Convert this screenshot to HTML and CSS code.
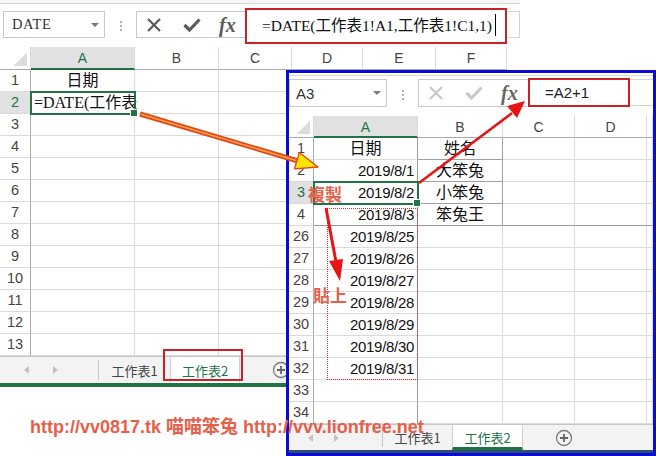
FILE: index.html
```html
<!DOCTYPE html>
<html>
<head>
<meta charset="utf-8">
<title>Excel 日期複製</title>
<link rel="stylesheet" href="styles.css">
</head>
<body>
<div class="stage">

  <div class="win outer">
    <div class="ribbon-edge"></div>
    <div class="fbar">
      <div class="namebox serif"><span>DATE</span><i class="dd"></i></div>
      <div class="grip"><b></b><b></b><b></b></div>
      <div class="fbtns dark">
        <svg class="ic-x" width="16" height="16" viewBox="0 0 16 16"><path d="M2 2L14 14M14 2L2 14"/></svg>
        <svg class="ic-ok" width="18" height="16" viewBox="0 0 18 16"><path d="M1.5 8L6.5 13L16.5 2.5"/></svg>
        <span class="fx">fx</span>
      </div>
      <div class="finput hl serif">=DATE(工作表1!A1,工作表1!C1,1)<span class="caret"></span></div>
      <div class="frest"></div>
    </div>
    <div class="grid g-outer">
      <div class="h corner"></div><div class="h on">A</div><div class="h">B</div><div class="h">C</div><div class="h">D</div><div class="h">E</div><div class="h">F</div>
      <div class="r">1</div><div class="c ctr serif">日期</div><div></div><div></div><div></div><div></div><div></div>
      <div class="r on">2</div><div class="c sel clip serif">=DATE(工作表</div><div></div><div></div><div></div><div></div><div></div>
      <div class="r">3</div><div></div><div></div><div></div><div></div><div></div><div></div>
      <div class="r">4</div><div></div><div></div><div></div><div></div><div></div><div></div>
      <div class="r">5</div><div></div><div></div><div></div><div></div><div></div><div></div>
      <div class="r">6</div><div></div><div></div><div></div><div></div><div></div><div></div>
      <div class="r">7</div><div></div><div></div><div></div><div></div><div></div><div></div>
      <div class="r">8</div><div></div><div></div><div></div><div></div><div></div><div></div>
      <div class="r">9</div><div></div><div></div><div></div><div></div><div></div><div></div>
      <div class="r">10</div><div></div><div></div><div></div><div></div><div></div><div></div>
      <div class="r">11</div><div></div><div></div><div></div><div></div><div></div><div></div>
      <div class="r">12</div><div></div><div></div><div></div><div></div><div></div><div></div>
      <div class="r">13</div><div></div><div></div><div></div><div></div><div></div><div></div>
    </div>
    <div class="tabs t-outer">
      <div class="nav"><i class="tri-l"></i><i class="tri-r"></i></div>
      <div class="tab">工作表1</div>
      <div class="tab act">工作表2</div>
      <svg class="plus" width="18" height="18" viewBox="0 0 18 18"><circle cx="9" cy="9" r="7.5"/><path d="M9 5V13M5 9H13"/></svg>
    </div>
    <div class="status"></div>
  </div>

  <div class="win inner">
    <div class="edge"></div>
    <div class="fbar">
      <div class="namebox"><span>A3</span><i class="dd"></i></div>
      <div class="grip"><b></b><b></b><b></b></div>
      <div class="fbtns light">
        <svg class="ic-x" width="16" height="16" viewBox="0 0 16 16"><path d="M2 2L14 14M14 2L2 14"/></svg>
        <svg class="ic-ok" width="18" height="16" viewBox="0 0 18 16"><path d="M1.5 8L6.5 13L16.5 2.5"/></svg>
        <span class="fx">fx</span>
      </div>
      <div class="finput hl">=A2+1</div>
      <div class="frest"></div>
    </div>
    <div class="grid g-inner">
      <div class="h corner"></div><div class="h on">A</div><div class="h">B</div><div class="h">C</div><div class="h">D</div><div class="h"></div>
      <div class="r">1</div><div class="c ctr bA">日期</div><div class="c ctr bB">姓名</div><div></div><div></div><div></div>
      <div class="r">2</div><div class="c num bA">2019/8/1</div><div class="c ctr bB">大笨兔</div><div></div><div></div><div></div>
      <div class="r on">3</div><div class="c num bA sel">2019/8/2</div><div class="c ctr bB">小笨兔</div><div></div><div></div><div></div>
      <div class="r">4</div><div class="c num bA hb">2019/8/3</div><div class="c ctr bB hb">笨兔王</div><div class="hb"></div><div class="hb"></div><div class="hb"></div>
      <div class="r">26</div><div class="c num bA">2019/8/25</div><div></div><div></div><div></div><div></div>
      <div class="r">27</div><div class="c num bA">2019/8/26</div><div></div><div></div><div></div><div></div>
      <div class="r">28</div><div class="c num bA">2019/8/27</div><div></div><div></div><div></div><div></div>
      <div class="r">29</div><div class="c num bA">2019/8/28</div><div></div><div></div><div></div><div></div>
      <div class="r">30</div><div class="c num bA">2019/8/29</div><div></div><div></div><div></div><div></div>
      <div class="r">31</div><div class="c num bA">2019/8/30</div><div></div><div></div><div></div><div></div>
      <div class="r">32</div><div class="c num bA">2019/8/31</div><div></div><div></div><div></div><div></div>
      <div class="r">33</div><div class="bA"></div><div></div><div></div><div></div><div></div>
      <div class="r">34</div><div class="bA"></div><div></div><div></div><div></div><div></div>
    </div>
    <div class="tabs t-inner">
      <div class="nav"><i class="tri-l"></i><i class="tri-r"></i></div>
      <div class="tab">工作表1</div>
      <div class="tab act">工作表2</div>
      <svg class="plus" width="18" height="18" viewBox="0 0 18 18"><circle cx="9" cy="9" r="7.5"/><path d="M9 5V13M5 9H13"/></svg>
    </div>
    <div class="status"></div>
    <div class="marquee"></div>
  </div>

  <div class="hlbox tabbox"></div>

  <svg class="overlay" width="656" height="456" viewBox="0 0 656 456">
    <line x1="140" y1="114" x2="298" y2="161" stroke="#e2461a" stroke-width="5"/>
    <line x1="141" y1="114.3" x2="298" y2="161" stroke="#ffa544" stroke-width="1.6"/>
    <polygon points="318,167 294.5,168.8 299.4,152.6" fill="#ffe600" stroke="#e8401a" stroke-width="1.3" stroke-linejoin="round"/>
    <line x1="419" y1="183" x2="512" y2="113" stroke="#e61414" stroke-width="2.6"/>
    <polygon points="525,101 517,118 507,106" fill="#e61414"/>
    <line x1="326" y1="208" x2="336" y2="262" stroke="#e61414" stroke-width="3"/>
    <polygon points="340,281 329,261 343,259" fill="#e61414"/>
  </svg>

  <div class="note n-copy">複製</div>
  <div class="note n-paste">貼上</div>
  <div class="watermark">http://vv0817.tk 喵喵笨兔 http://vvv.lionfree.net</div>
</div>
</body>
</html>
```
FILE: styles.css
```css
* { box-sizing: border-box; }
html, body { margin: 0; padding: 0; }
body {
  width: 656px; height: 456px; overflow: hidden; background: #fff;
  font-family: "Liberation Sans", "Noto Sans CJK TC", sans-serif; color: #222;
}
.stage { position: relative; width: 656px; height: 456px; }
.serif { font-family: "Liberation Serif", "Noto Sans CJK TC", serif; }

/* windows */
.win { display: flex; flex-direction: column; background: #fff; }
.outer { width: 520px; }
.ribbon-edge { height: 4px; border-bottom: 1px solid #d9d9d9; background: #f6f6f6; }
.inner {
  position: absolute; left: 286px; top: 70px; width: 370px; height: 386px;
  border: 3px solid #0b0bd6; overflow: hidden; z-index: 2;
}
.edge { height: 3px; border-bottom: 1px solid #d9d9d9; }

/* formula bar */
.fbar { display: flex; align-items: flex-start; flex: none; }
.outer .fbar { height: 39px; margin-top: 4px; }
.inner .fbar { height: 40px; }
.namebox {
  display: flex; align-items: center; justify-content: space-between;
  border: 1px solid #c8c8c8; color: #333; flex: none;
}
.outer .namebox { margin: 3px 0 0 3px; width: 102px; height: 27px; padding: 0 5px 0 8px; font-size: 14.5px; letter-spacing: 0.6px; }
.inner .namebox { margin-top: 3px; width: 98px; height: 28px; padding: 0 5px 0 6px; font-size: 15px; }
.dd { width: 0; height: 0; border-left: 4px solid transparent; border-right: 4px solid transparent; border-top: 4px solid #7a7a7a; }
.grip { width: 31px; display: flex; flex-direction: column; align-items: center; gap: 2px; flex: none; }
.outer .grip { margin-top: 13px; }
.inner .grip { margin-top: 14px; }
.grip b { width: 2px; height: 2px; background: #b0b0b0; }
.fbtns {
  display: flex; align-items: center; padding-left: 9px; flex: none;
  border: 1px solid #c8c8c8; border-right: 0; margin-top: 3px;
}
.outer .fbtns { width: 109px; height: 27px; }
.inner .fbtns { width: 110px; height: 28px; }
.fbtns svg path { fill: none; stroke-linecap: butt; }
.ic-x path { stroke-width: 2.2; }
.ic-ok { margin-left: 21px; }
.ic-ok path { stroke-width: 3.2; }
.fx { margin-left: 18px; font: italic bold 20px "Liberation Serif", serif; line-height: 20px; }
.dark path { stroke: #5a5a5a; }
.dark .fx { color: #5a5a5a; }
.light path { stroke: #c9c9c9; }
.light .fx { color: #666; }
.finput { flex: none; white-space: nowrap; color: #111; }
.hl { border: 2px solid #cc2027; }
.outer .finput { width: 262px; height: 36px; padding-left: 15px; font-size: 15.5px; line-height: 32px; }
.inner .finput { width: 102px; height: 29px; margin-top: 2px; padding-left: 15px; font-size: 15px; line-height: 25px; color: #222; }
.caret { display: inline-block; width: 1px; height: 22px; background: #000; vertical-align: -5px; margin-left: 3px; }
.frest { flex: 1; margin-top: 3px; height: 27px; border-top: 1px solid #d4d4d4; border-bottom: 1px solid #d4d4d4; }
.outer .frest { border-right: 1px solid #d4d4d4; }

/* grids */
.grid { display: grid; flex: none; }
.g-outer { grid-template-columns: 31px 104px 84px 73px 71px 73px 71px; grid-template-rows: 23px; grid-auto-rows: 22px; }
.g-inner { grid-template-columns: 25px 104px 85px 72px 72px 6px; grid-template-rows: 22px; grid-auto-rows: 22px; }
.grid > div {
  border-right: 1px solid #dadada; border-bottom: 1px solid #dadada;
  min-width: 0; white-space: nowrap; overflow: hidden;
}
.grid > .h { text-align: center; font-size: 14px; color: #444; line-height: 22px; border-bottom-color: #ababab; }
.grid > .h.on { background: #e1e1e1; color: #217346; border-bottom: 2px solid #217346; }
.grid > .corner {
  background: linear-gradient(to bottom right, transparent 50%, #dcdcdc 50%) no-repeat right 3px bottom 3px / 14px 14px;
}
.g-inner > .corner { background-size: 13px 13px; }
.grid > .r { text-align: center; font-size: 14.5px; color: #444; line-height: 21px; border-right-color: #ababab; }
.grid > .r.on { background: #e1e1e1; color: #217346; }
.c { font-size: 16px; line-height: 21px; padding: 0 3px; color: #111; }
.ctr { text-align: center; }
.num { text-align: right; font-size: 15px; letter-spacing: -0.3px; padding-right: 3px; }
.grid > .bA { border-right-color: #9a9a9a; }
.grid > .bB { border-right-color: #a0a0a0; border-bottom-color: #a0a0a0; }
.grid > .hb { border-bottom-color: #9a9a9a; }
.grid > .sel { overflow: visible; position: relative; z-index: 1; outline: 2px solid #217346; outline-offset: -1px; }
.clip { text-overflow: clip; }
.g-outer > .clip { padding-right: 0; }
.sel::after {
  content: ""; position: absolute; right: -4px; bottom: -4px; width: 6px; height: 6px;
  background: #217346; border: 1px solid #fff;
}

/* sheet tabs */
.tabs { display: flex; align-items: stretch; flex: none; background: #f3f3f3; border-top: 1px solid #c6c6c6; font-family: "Noto Sans CJK TC", sans-serif; font-size: 13px; color: #444; }
.t-outer { height: 27px; }
.t-inner { height: 26px; }
.nav { display: flex; align-items: center; border-right: 1px solid #c6c6c6; margin: 3px 0; }
.t-outer .nav { width: 99px; padding-left: 24px; gap: 24px; }
.t-inner .nav { width: 94px; padding-left: 19px; gap: 21px; }
.tri-l { width: 0; height: 0; border-top: 4px solid transparent; border-bottom: 4px solid transparent; border-right: 5px solid #c2c2c2; }
.tri-r { width: 0; height: 0; border-top: 4px solid transparent; border-bottom: 4px solid transparent; border-left: 5px solid #c2c2c2; }
.tab { display: flex; align-items: center; justify-content: center; }
.t-outer .tab { width: 71px; }
.t-inner .tab { width: 69px; }
.tab.act { background: #fff; color: #217346; border-left: 1px solid #d0d0d0; border-right: 1px solid #d0d0d0; }
.t-outer .tab.act { width: 70px; }
.t-inner .tab.act { width: 71px; border-bottom: 3px solid #217346; padding-top: 2px; }
.plus { align-self: center; }
.t-outer .plus { margin-left: 32px; }
.t-inner .plus { margin-left: 32px; }
.plus circle { fill: none; stroke: #7a7a7a; stroke-width: 1.3; }
.plus path { stroke: #666; stroke-width: 1.8; }
.status { flex: none; background: #217346; }
.outer .status { height: 4px; }
.inner .status { height: 3px; background: #2c4f73; }

/* annotations */
.marquee { position: absolute; left: 38px; top: 135px; width: 91px; height: 172px; border: 1px dotted #e03030; }
.hlbox { position: absolute; border: 2px solid #cc2027; }
.tabbox { left: 163px; top: 349px; width: 80px; height: 32px; }
.overlay { position: absolute; left: 0; top: 0; z-index: 3; }
.note {
  position: absolute; z-index: 4; color: #e5604a; font-weight: bold; font-size: 17px; line-height: 20px;
  font-family: "Noto Sans CJK TC", sans-serif;
}
.n-copy { left: 308px; top: 184px; }
.n-paste { left: 313px; top: 285px; }
.watermark {
  position: absolute; z-index: 4; left: 30px; top: 416px; white-space: nowrap;
  color: #e5604a; font-weight: bold; font-size: 18px; line-height: 22px;
  font-family: "Liberation Sans", "Noto Sans CJK TC", sans-serif;
}
```
